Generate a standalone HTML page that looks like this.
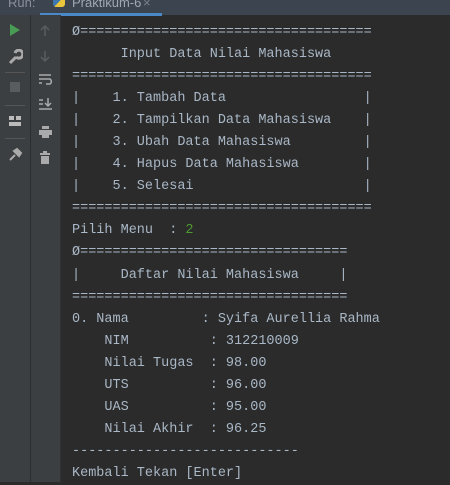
<!DOCTYPE html>
<html><head><style>
html,body{margin:0;padding:0;width:450px;height:482px;overflow:hidden;background:#2b2b2b;}
.tab{position:absolute;left:0;top:0;width:450px;height:15px;background:#3c4450;}
.tab .run{position:absolute;left:8px;top:-5px;color:#8a9099;font:13px "Liberation Sans",sans-serif;}
.tab .name{position:absolute;left:72px;top:-5px;color:#a0a8b2;font:13px "Liberation Sans",sans-serif;}
.tab .x{position:absolute;left:143px;top:-5px;color:#7a808a;font:13px "Liberation Sans",sans-serif;}
.tab .ul{position:absolute;left:40px;top:13px;width:122px;height:3px;background:#4a88c7;}
.py{position:absolute;left:53px;top:-3px;width:12px;height:10px;background:linear-gradient(135deg,#3d77b0 50%,#e8c53a 50%);border-radius:3px;}
.c1{position:absolute;left:0;top:15px;width:30px;height:467px;background:#3c3f41;border-right:1px solid #2b2d2f;}
.c2{position:absolute;left:31px;top:15px;width:29px;height:467px;background:#3c3f41;border-right:1px solid #323232;}
.sep{position:absolute;left:5px;width:20px;height:1px;background:#555;}
pre{position:absolute;left:72px;top:22px;margin:0;font:13.5px/22.05px "Liberation Mono",monospace;color:#a9b7c6;}
.g{color:#4e9a2f;}
</style></head><body>
<div class="tab"><span class="run">Run:</span><div class="py"></div><span class="name">Praktikum-6</span><span class="x">×</span><div class="ul"></div></div>
<div class="c1">
<svg style="position:absolute;left:9px;top:8px" width="12" height="14"><polygon points="1,1 11,7 1,13" fill="#499c54"/></svg>
<svg style="position:absolute;left:7px;top:34px" width="16" height="16"><path d="M3 14 L9 8 M9 8 A4 4 0 1 0 8 4" stroke="#aaa" stroke-width="3" fill="none"/></svg>
<div class="sep" style="top:57px"></div>
<div style="position:absolute;left:10px;top:67px;width:10px;height:10px;background:#5a5d60"></div>
<div class="sep" style="top:90px"></div>
<div style="position:absolute;left:9px;top:101px;width:5px;height:4px;background:#bbb"></div>
<div style="position:absolute;left:16px;top:101px;width:5px;height:4px;background:#bbb"></div>
<div style="position:absolute;left:9px;top:107px;width:12px;height:4px;background:#bbb"></div>
<div class="sep" style="top:123px"></div>
<svg style="position:absolute;left:8px;top:132px" width="15" height="15"><path d="M2 13 L7 8 M6 4 L11 9 L13 6 L9 2 Z" stroke="#aaa" stroke-width="2" fill="#aaa"/></svg>
</div>
<div class="c2">
<svg style="position:absolute;left:8px;top:10px" width="12" height="12"><path d="M6 11 V1 M2 5 L6 1 L10 5" stroke="#5a5d60" stroke-width="1.5" fill="none"/></svg>
<svg style="position:absolute;left:8px;top:35px" width="12" height="12"><path d="M6 1 V11 M2 7 L6 11 L10 7" stroke="#5a5d60" stroke-width="1.5" fill="none"/></svg>
<svg style="position:absolute;left:7px;top:58px" width="15" height="14"><path d="M1 2 H13 M1 6 H12 A3 3 0 0 1 12 11 H8 M1 10 H4" stroke="#aaa" stroke-width="1.5" fill="none"/></svg>
<svg style="position:absolute;left:7px;top:82px" width="15" height="14"><path d="M1 3 H5 M1 7 H5 M1 12 H14 M10 1 V9 M7 6 L10 9 L13 6" stroke="#aaa" stroke-width="1.5" fill="none"/></svg>
<svg style="position:absolute;left:7px;top:110px" width="15" height="14"><rect x="4" y="1" width="7" height="3" fill="#aaa"/><rect x="1" y="5" width="13" height="5" fill="#aaa"/><rect x="4" y="9" width="7" height="4" fill="#aaa"/></svg>
<svg style="position:absolute;left:8px;top:136px" width="13" height="14"><rect x="1" y="2" width="10" height="2" fill="#aaa"/><rect x="4" y="0" width="4" height="2" fill="#aaa"/><rect x="2" y="5" width="8" height="8" fill="#aaa"/></svg>
</div>
<pre>Ø====================================
      Input Data Nilai Mahasiswa
=====================================
|    1. Tambah Data                 |
|    2. Tampilkan Data Mahasiswa    |
|    3. Ubah Data Mahasiswa         |
|    4. Hapus Data Mahasiswa        |
|    5. Selesai                     |
=====================================
Pilih Menu  : <span class="g">2</span>
Ø=================================
|     Daftar Nilai Mahasiswa     |
==================================
0. Nama         : Syifa Aurellia Rahma
    NIM          : 312210009
    Nilai Tugas  : 98.00
    UTS          : 96.00
    UAS          : 95.00
    Nilai Akhir  : 96.25
----------------------------
Kembali Tekan [Enter]</pre>
</body></html>
